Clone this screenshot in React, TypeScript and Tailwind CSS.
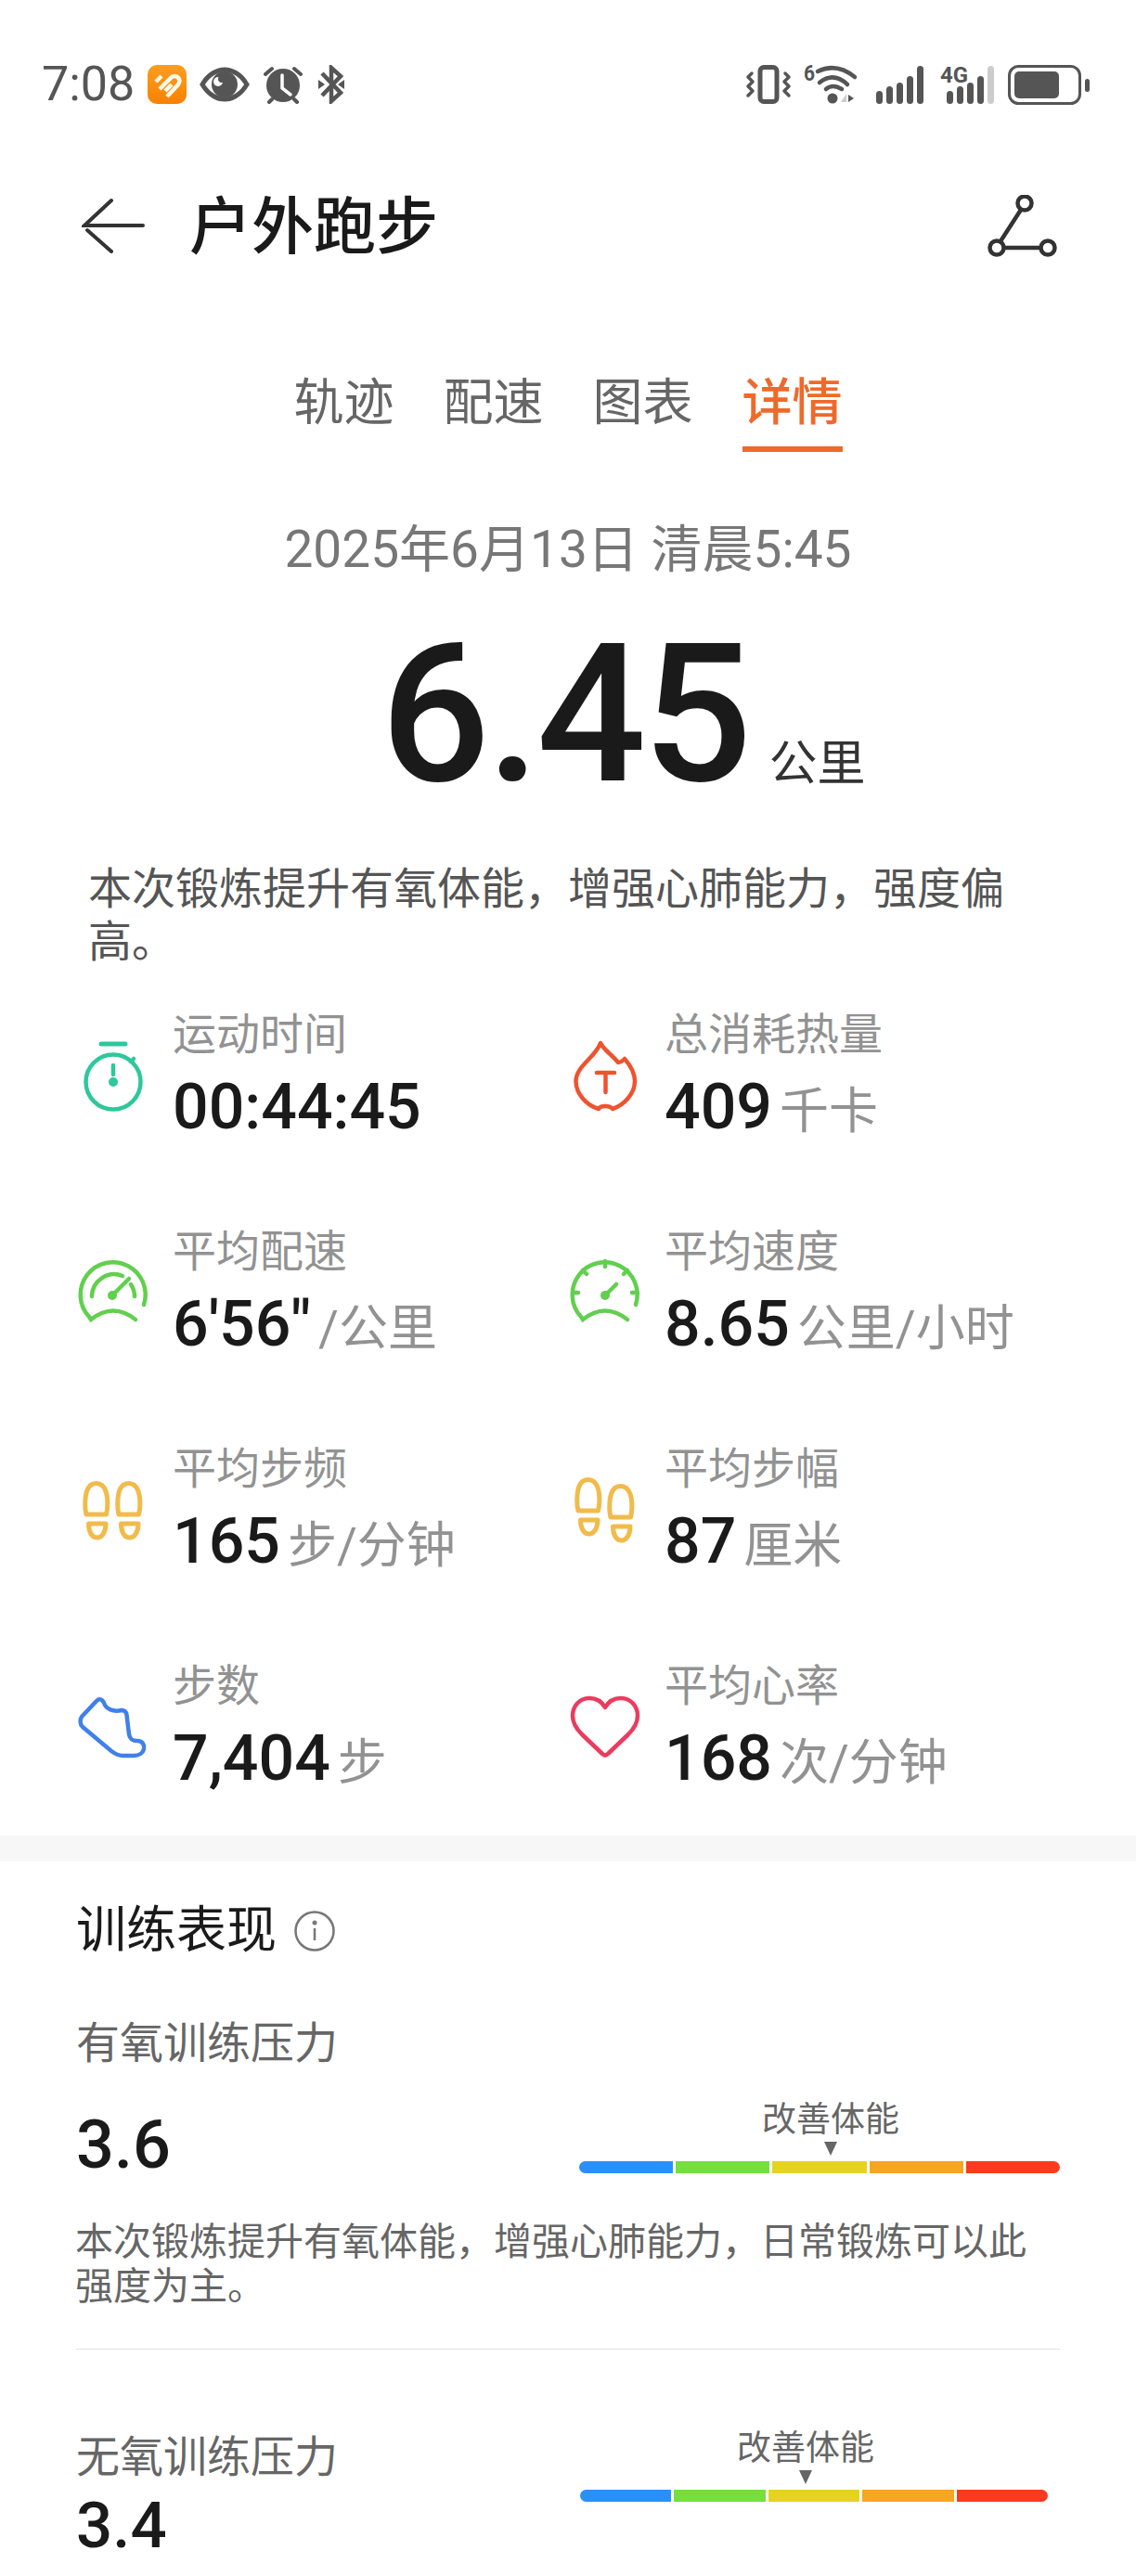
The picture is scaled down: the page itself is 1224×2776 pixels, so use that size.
import React from 'react';

const Stopwatch = () => (
  <svg width="80" height="80" viewBox="0 0 80 80" fill="none" stroke="#2fc79c" strokeWidth="4.5" strokeLinecap="round">
    <path d="M27 6H53" strokeWidth="5" />
    <circle cx="40" cy="47" r="29.5" />
    <path d="M59 25L62 22" />
    <path d="M40 29V39" />
    <circle cx="40" cy="47" r="5" fill="#2fc79c" stroke="none" />
  </svg>
);

const PaceGauge = () => (
  <svg width="80" height="80" viewBox="0 0 80 80" fill="none" stroke="#62cf4f" strokeWidth="4.5" strokeLinecap="round">
    <path d="M64 69Q40 50 16 69L14 66A35 35 0 1 1 73 53" />
    <path d="M17 44A24 24 0 0 1 50 22" />
    <path d="M59 31A24 24 0 0 1 63 44" />
    <path d="M39 43L57 25" />
    <circle cx="39" cy="43" r="5" fill="#62cf4f" stroke="none" />
  </svg>
);

const SpeedGauge = () => (
  <svg width="80" height="80" viewBox="0 0 80 80" fill="none" stroke="#62cf4f" strokeWidth="4.5" strokeLinecap="round">
    <path d="M64 69Q40 50 16 69L14 66A35 35 0 1 1 73 53" />
    <path d="M40 6V12M16 16L20 20M64 16L60 20M5 40H11M75 40H69" />
    <path d="M40 43L52 31" />
    <circle cx="40" cy="43" r="5" fill="#62cf4f" stroke="none" />
  </svg>
);

const Flame = () => (
  <svg width="80" height="80" viewBox="0 0 80 80" fill="none" stroke="#ee5330" strokeWidth="4.5" strokeLinecap="round" strokeLinejoin="round">
    <path d="M35 5C38 12 48 18 54 26C56 26 59 24 61 22C68 30 72 38 72 46C72 60 60 72 48 76C45 72 35 72 33 76C20 72 8.5 60 8.5 46C8.5 30 30 20 35 5Z" />
    <path d="M31 37H50M40.5 37V58" />
  </svg>
);

const Foot = ({ x, y }: { x: number; y: number }) => (
  <g transform={`translate(${x} ${y})`}>
    <path d="M10 40C9 25 11 11.5 21.7 11.5C32 11.5 35 25 33.5 40L32.5 45L11 45Z" />
    <path d="M13.5 55L32 55C32 64 28 70 22.7 70C17 70 13.5 64 13.5 55Z" />
  </g>
);

const Feet = ({ a, b }: { a: number; b: number }) => (
  <svg width="80" height="80" viewBox="0 0 80 80" fill="none" stroke="#f1bb4c" strokeWidth="5" strokeLinejoin="round">
    <Foot x={0} y={a} />
    <Foot x={35} y={b} />
  </svg>
);

const Shoe = () => (
  <svg width="80" height="80" viewBox="0 0 80 80" fill="none" stroke="#4180ea" strokeWidth="4.5" strokeLinejoin="round">
    <path d="M6 29L22 12C25 9 28 10 30 14C32 21 40 24 49 22C53 22 54 24 54.5 27L57 48C58 53 60 55 66 55C72 55 74 60 73 64C72 68 68 71 62 71L50 71C45 71 42 69 38 66L7 40C4 37 4 32 6 29Z" />
  </svg>
);

const Heart = () => (
  <svg width="80" height="80" viewBox="0 0 80 80" fill="none" stroke="#ea3c5f" strokeWidth="4.5" strokeLinejoin="round">
    <path d="M40 19C36 12 29 9 23 9C12 9 5 18 5 28C5 36 9 42 15 48L37 69C39 71 41 71 43 69L65 48C71 42 75 36 75 28C75 18 68 9 57 9C51 9 44 12 40 19Z" />
  </svg>
);

const stats = [
  { icon: <Stopwatch />, label: '运动时间', value: '00:44:45', unit: '' },
  { icon: <Flame />, label: '总消耗热量', value: '409', unit: '千卡' },
  { icon: <PaceGauge />, label: '平均配速', value: `6'56"`, unit: '/公里' },
  { icon: <SpeedGauge />, label: '平均速度', value: '8.65', unit: '公里/小时' },
  { icon: <Feet a={0} b={0} />, label: '平均步频', value: '165', unit: '步/分钟' },
  { icon: <Feet a={-4} b={3} />, label: '平均步幅', value: '87', unit: '厘米' },
  { icon: <Shoe />, label: '步数', value: '7,404', unit: '步' },
  { icon: <Heart />, label: '平均心率', value: '168', unit: '次/分钟' },
];

const StatusBar = () => (
  <div className="h-[182px] flex items-center justify-between pl-[45px] pr-[50px]">
    <div className="flex items-center gap-[14px]">
      <span className="text-[52px] leading-none text-[#555]">7:08</span>
      <svg width="42" height="42" viewBox="0 0 42 42" fill="none">
        <defs>
          <linearGradient id="health" x1="0" y1="0" x2="0" y2="1">
            <stop offset="0" stopColor="#fb9e22" />
            <stop offset="1" stopColor="#f98100" />
          </linearGradient>
        </defs>
        <rect width="42" height="42" rx="10" fill="url(#health)" />
        <path d="M9 18L15 12M13 26L26 13C31 10 37 15 33 21L21 34M19 28L26 21" stroke="#fff8e8" strokeWidth="4.5" />
      </svg>
      <svg width="54" height="42" viewBox="0 0 54 42" fill="none" stroke="#555" strokeWidth="5">
        <path d="M3 21C10 9 20 5 27 5C34 5 44 9 51 21C44 33 34 37 27 37C20 37 10 33 3 21Z" />
        <circle cx="27" cy="21" r="14" fill="#555" stroke="none" />
        <circle cx="20" cy="18" r="5" fill="#fff" stroke="none" />
        <circle cx="24" cy="15" r="4" fill="#555" stroke="none" />
      </svg>
      <svg width="45" height="42" viewBox="0 0 45 42" fill="none" stroke="#555" strokeWidth="4" strokeLinecap="round">
        <circle cx="22" cy="22" r="18" fill="#555" stroke="none" />
        <path d="M3 10L10 4M41 10L34 4M10 37L7 40M34 37L37 40" />
        <path d="M21 11V25L30 32" stroke="#fff" strokeWidth="3.5" />
      </svg>
      <svg width="30" height="42" viewBox="0 0 30 42" fill="none" stroke="#555" strokeWidth="4.5">
        <path d="M5 9L25 30L15 39V3L25 12L5 33" />
        <path d="M1 16L8 21L1 26ZM29 16L22 21L29 26Z" fill="#555" stroke="none" />
      </svg>
    </div>
    <div className="flex items-center">
      <svg width="52" height="42" viewBox="0 0 52 42" fill="none" stroke="#555" strokeLinecap="round" strokeLinejoin="round">
        <rect x="17" y="2.5" width="18" height="37" rx="4" strokeWidth="5" />
        <path d="M8 9L4 13L9 18L4 23L9 28L4 33" strokeWidth="3.5" />
        <path d="M44 9L48 13L43 18L48 23L43 28L48 33" strokeWidth="3.5" />
      </svg>
      <svg width="59" height="44" viewBox="0 0 59 44" fill="none" stroke="#555" strokeLinecap="round" className="ml-[12px] overflow-visible">
        <text x="0" y="18" stroke="none" textLength="12" lengthAdjust="spacingAndGlyphs" className="fill-[#555] text-[24px] font-bold">6</text>
        <path d="M15 8Q35 -2 55 14" strokeWidth="4.5" />
        <path d="M17 20Q32 8 47 22" strokeWidth="4.5" />
        <path d="M24 27Q31 21 41 27" strokeWidth="4.5" />
        <circle cx="31" cy="37" r="5.5" fill="#555" stroke="none" />
        <path d="M40 41H46V32Z" fill="#ccc" stroke="none" />
        <path d="M48 33L54 37L48 41Z" fill="#555" stroke="none" />
      </svg>
      <svg width="53" height="43" viewBox="0 0 53 43" fill="#555" className="ml-[19px]">
        <rect x="0" y="28" width="7" height="14" rx="3.5" />
        <rect x="11" y="23" width="7" height="19" rx="3.5" />
        <rect x="22" y="19" width="7" height="23" rx="3.5" />
        <rect x="33" y="12" width="7" height="30" rx="3.5" />
        <rect x="44" y="1" width="7" height="41" rx="3.5" />
      </svg>
      <svg width="58" height="43" viewBox="0 0 58 43" fill="#555" className="ml-[16px] overflow-visible">
        <text x="0" y="19" textLength="30" lengthAdjust="spacingAndGlyphs" className="text-[24px] font-bold">4G</text>
        <rect x="7" y="28" width="7" height="14" rx="3.5" />
        <rect x="18" y="23" width="7" height="19" rx="3.5" />
        <rect x="29" y="19" width="7" height="23" rx="3.5" />
        <rect x="40" y="12" width="7" height="30" rx="3.5" />
        <rect x="51" y="1" width="7" height="41" rx="3.5" fill="#ccc" />
      </svg>
      <svg width="88" height="43" viewBox="0 0 88 43" fill="none" className="ml-[15px]">
        <rect x="1.5" y="1.5" width="76" height="40" rx="10" stroke="#555" strokeWidth="3" />
        <rect x="7" y="7" width="48" height="29" rx="5" fill="#555" />
        <rect x="83" y="15" width="5" height="14" rx="2.5" fill="#555" />
      </svg>
    </div>
  </div>
);

const Header = () => (
  <div className="h-[122px] flex items-center pl-[88px] pr-[85px]">
    <svg width="68" height="60" viewBox="0 0 68 60" fill="none" stroke="#333" strokeWidth="4" strokeLinecap="round">
      <path d="M32 3L3 30H66" />
      <path d="M6 35L32 58" />
    </svg>
    <h1 className="ml-[48px] pt-[4px] text-[67px] leading-none font-medium text-[#1a1a1a]">户外跑步</h1>
    <svg width="75" height="67" viewBox="0 0 75 67" fill="none" stroke="#333" strokeWidth="4.5" className="ml-auto">
      <circle cx="40" cy="9" r="7.5" />
      <circle cx="10" cy="57" r="7.5" />
      <circle cx="65" cy="57" r="7.5" />
      <path d="M36 16L14 50M18 57H57" />
    </svg>
  </div>
);

const tabs = ['轨迹', '配速', '图表', '详情'];

const Tabs = () => (
  <div className="mt-[96px] flex justify-center gap-[53px]">
    {tabs.map((t, i) => (
      <div key={t} className="flex flex-col items-center">
        <div className={i === 3 ? 'text-[54px] leading-[70px] font-medium text-[#ee6a2b]' : 'text-[54px] leading-[70px] text-[#666]'}>{t}</div>
        <div className={i === 3 ? 'mt-[11px] h-[6px] w-full bg-[#ee6a2b]' : 'mt-[11px] h-[6px]'} />
      </div>
    ))}
  </div>
);

const StatCell = ({ icon, label, value, unit }: (typeof stats)[number]) => (
  <div className="flex items-center gap-[24px]">
    <div className="w-[80px] pb-[12px] shrink-0">{icon}</div>
    <div>
      <div className="h-[56px] text-[47px] leading-[56px] text-[#929292]">{label}</div>
      <div className="h-[100px] flex items-baseline gap-[8px] leading-[100px]">
        <span className="text-[68px] font-medium text-[#1a1a1a]">{value}</span>
        {unit && <span className="text-[53px] text-[#929292]">{unit}</span>}
      </div>
    </div>
  </div>
);

const Pressure = ({ width, offset }: { width: string; offset: string }) => (
  <div className={width}>
    <div className={offset}>
      <div className="w-[144px] flex flex-col items-center">
        <div className="text-[37px] leading-[44px] whitespace-nowrap text-[#666]">改善体能</div>
        <svg width="14" height="15" viewBox="0 0 14 15" className="mt-px">
          <path d="M0 0H14L7 15Z" fill="#666" />
        </svg>
      </div>
    </div>
    <div className="mt-[6px] h-[13px] flex gap-[3px]">
      <div className="flex-1 rounded-l-full bg-[#2a8ffb]" />
      <div className="flex-1 bg-[#76df3f]" />
      <div className="flex-1 bg-[#e6d321]" />
      <div className="flex-1 bg-[#f5a623]" />
      <div className="flex-1 rounded-r-full bg-[#fb3a20]" />
    </div>
  </div>
);

const Training = () => (
  <div className="px-[82px]">
    <div className="pt-[40px] flex items-center h-[110px]">
      <h2 className="text-[54px] leading-[70px] text-[#1a1a1a]">训练表现</h2>
      <svg width="44" height="44" viewBox="0 0 44 44" fill="none" stroke="#777" className="ml-[19px]">
        <circle cx="22" cy="22" r="20.5" strokeWidth="2.5" />
        <circle cx="22" cy="13" r="2.5" fill="#777" stroke="none" />
        <path d="M22 19V32" strokeWidth="2.5" />
      </svg>
    </div>
    <div className="mt-[58px] text-[47px] leading-[56px] text-[#666]">有氧训练压力</div>
    <div className="mt-[32px] flex justify-between items-start">
      <span className="text-[72px] leading-[100px] font-medium text-[#1a1a1a]">3.6</span>
      <Pressure width="w-[518px] pt-px" offset="ml-[199px]" />
    </div>
    <p className="mt-[30px] -ml-px text-[41px] leading-[48px] text-[#666]">本次锻炼提升有氧体能，增强心肺能力，日常锻炼可以此强度为主。</p>
    <div className="mt-[43px] h-px bg-[#e2e2e2]" />
    <div className="mt-[84px] flex justify-between items-start">
      <div className="pt-[4px]">
        <div className="text-[47px] leading-[56px] text-[#666]">无氧训练压力</div>
        <div className="text-[69px] leading-[92px] font-medium text-[#1a1a1a]">3.4</div>
      </div>
      <Pressure width="w-[504px] mr-[13px] pt-px" offset="ml-[171px]" />
    </div>
  </div>
);

const App = () => {
  return (
    <div className="w-[1224px] h-[2776px] overflow-hidden bg-white font-[Roboto,'Noto_Sans_CJK_SC',sans-serif]">
      <StatusBar />
      <Header />
      <Tabs />
      <div className="mt-[70px] text-center text-[55px] leading-[70px] text-[#777]">2025年6月13日 清晨5:45</div>
      <div className="mt-[33px] pl-[410px] h-[220px] flex items-baseline gap-[22px] leading-[220px]">
        <span className="text-[208px] tracking-[-4px] font-medium text-[#1a1a1a]">6.45</span>
        <span className="text-[52px] text-[#333]">公里</span>
      </div>
      <p className="mt-[49px] ml-[95px] w-[1040px] text-[47px] leading-[57px] text-[#555]">本次锻炼提升有氧体能，增强心肺能力，强度偏高。</p>
      <div className="mt-[44px] ml-[82px] grid grid-cols-[530px_1fr] gap-y-[78px]">
        {stats.map((s) => (
          <StatCell key={s.label} {...s} />
        ))}
      </div>
      <div className="mt-[33px] h-[28px] bg-[#f7f7f7]" />
      <Training />
    </div>
  );
};

export default App;
